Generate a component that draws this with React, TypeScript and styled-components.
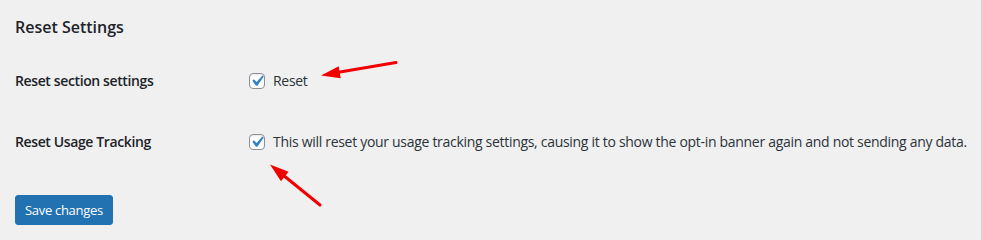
import React from "react";
import styled, { createGlobalStyle } from "styled-components";

const Global = createGlobalStyle`
  html, body { margin: 0; padding: 0; background: #f0f0f1; }
  body { font-family: "Open Sans", "Noto Sans", sans-serif; color: #1d2327; }
`;

const Page = styled.div`
  position: relative;
  width: 981px;
  height: 237px;
  box-sizing: border-box;
  padding: 16px 0 0 15px;
  overflow: hidden;
`;

const Title = styled.h2`
  margin: 0 0 12px;
  font-size: 16px;
  line-height: 22px;
  font-weight: 600;
  color: #1d2327;
`;

const Form = styled.div`
  display: grid;
  grid-template-columns: 234px 1fr;
  grid-auto-rows: 61px;
  align-items: center;
`;

const Label = styled.div`
  font-size: 14px;
  font-weight: 600;
  line-height: 18px;
  letter-spacing: -0.38px;
  color: #1d2327;
`;

const Field = styled.label`
  display: flex;
  align-items: center;
  gap: 8px;
  font-size: 14px;
  line-height: 18px;
  color: #2c3338;
  letter-spacing: -0.3px;
`;

const Box = styled.span`
  flex: none;
  width: 16px;
  height: 16px;
  box-sizing: border-box;
  border: 1px solid #8c8f94;
  border-radius: 4px;
  background: #fff;
  position: relative;
  box-shadow: inset 0 1px 2px rgba(0, 0, 0, 0.1);
  svg {
    position: absolute;
    left: -4px;
    top: -4px;
    width: 22px;
    height: 22px;
  }
`;

const Button = styled.button`
  margin-top: 23px;
  height: 30px;
  padding: 0 9px;
  border: 1px solid #2271b1;
  border-radius: 3px;
  background: #2271b1;
  color: #fff;
  font-family: "Open Sans", "Noto Sans", sans-serif;
  font-size: 13px;
  letter-spacing: -0.3px;
  line-height: 28px;
  cursor: pointer;
`;

const Overlay = styled.svg`
  position: absolute;
  left: 0;
  top: 0;
  pointer-events: none;
`;

const Check = ({ checked }: { checked: boolean }) => (
  <Box>
    {checked && (
      <svg viewBox="0 0 20 20">
        <path d="M14.83 4.89l1.34.94-5.81 8.38H9.02L5.78 9.67l1.34-1.25 2.57 2.4z" fill="#3582c4" />
      </svg>
    )}
  </Box>
);

export default function App() {
  return (
    <>
      <Global />
      <Page>
        <Title>Reset Settings</Title>
        <Form>
          <Label>Reset section settings</Label>
          <Field>
            <Check checked />
            Reset
          </Field>
          <Label>Reset Usage Tracking</Label>
          <Field>
            <Check checked />
            This will reset your usage tracking settings, causing it to show the opt-in banner again and not sending any data.
          </Field>
        </Form>
        <Button>Save changes</Button>
        <Overlay width="981" height="237" viewBox="0 0 981 237">
          <line x1="396" y1="62.5" x2="337" y2="72.5" stroke="#f20000" strokeWidth="3" strokeLinecap="round" />
          <polygon points="321,75.5 340.7,78.2 338.7,66.3" fill="#f20000" />
          <line x1="320" y1="205" x2="283" y2="175" stroke="#f20000" strokeWidth="3" strokeLinecap="round" />
          <polygon points="270,164.5 288.6,171.8 281,181.2" fill="#f20000" />
        </Overlay>
      </Page>
    </>
  );
}
